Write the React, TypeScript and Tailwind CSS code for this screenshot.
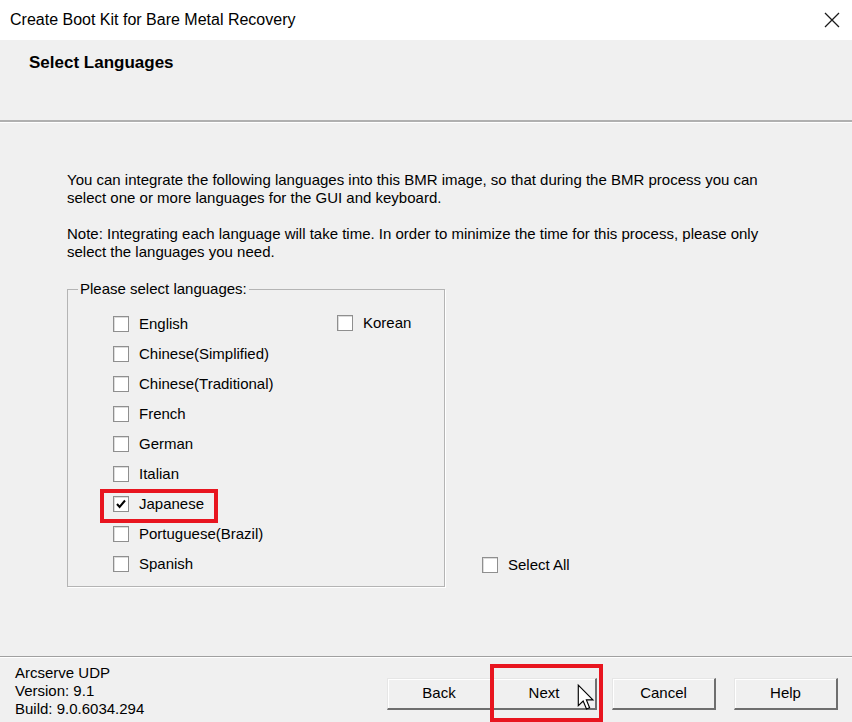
import React from 'react'

const font = { fontFamily: '"Liberation Sans", Arial, sans-serif' }

// Classic Win32 style checkbox with label
function Check({ label, checked = false }: { label: string; checked?: boolean }) {
  return (
    <div className="flex items-center h-[30px]">
      <div className="w-[16px] h-[16px] bg-white border border-[#8f8f8f] shadow-[inset_1px_1px_0_#dcdcdc] flex items-center justify-center">
        {checked && (
          <svg width="12" height="12" viewBox="0 0 12 12">
            <path d="M2 6 L4.6 9 L10 2.5" fill="none" stroke="#000" strokeWidth="2" />
          </svg>
        )}
      </div>
      <span className="ml-[10px] text-[15px] leading-[18px] text-black">{label}</span>
    </div>
  )
}

function Btn({ label, w }: { label: string; w: string }) {
  return (
    <div
      className={`${w} h-[32px] flex items-center justify-center text-[15px] text-black bg-[#f0f0f0] border-t border-l border-t-[#e6e6e6] border-l-[#e6e6e6] border-r-2 border-b-2 border-r-[#6e6e6e] border-b-[#6e6e6e] shadow-[inset_1px_1px_0_#ffffff]`}
    >
      {label}
    </div>
  )
}

export default function App() {
  const langs = [
    'English',
    'Chinese(Simplified)',
    'Chinese(Traditional)',
    'French',
    'German',
    'Italian',
    'Japanese',
    'Portuguese(Brazil)',
    'Spanish',
  ]

  return (
    <div className="relative w-[852px] h-[722px] overflow-hidden flex flex-col bg-[#f0f0f0] text-black" style={font}>
      {/* title bar */}
      <div className="h-[40px] bg-white flex items-center pl-[10px] pr-[12px]">
        <span className="text-[16px]">Create Boot Kit for Bare Metal Recovery</span>
        <svg className="ml-auto" width="16" height="16" viewBox="0 0 16 16">
          <path d="M1 1 L15 15 M15 1 L1 15" stroke="#1a1a1a" strokeWidth="1.3" />
        </svg>
      </div>

      {/* page header */}
      <div className="h-[80px] pl-[29px] pt-[13px]">
        <div className="text-[17px] leading-[20px] font-bold">Select Languages</div>
      </div>
      <div className="h-[2px] bg-[#b0b0b0]" />
      <div className="h-px bg-white" />

      {/* body */}
      <div className="flex-1 pl-[67px] pt-[48px] text-[15px] leading-[18px]">
        <p className="whitespace-nowrap">
          You can integrate the following languages into this BMR image, so that during the BMR process you can
          <br />
          select one or more languages for the GUI and keyboard.
        </p>
        <p className="whitespace-nowrap mt-[18px]">
          Note: Integrating each language will take time. In order to minimize the time for this process, please only
          <br />
          select the languages you need.
        </p>

        <div className="flex items-end mt-[19px]">
          <fieldset className="w-[378px] border border-[#b4b4b4] shadow-[1px_1px_0_#ffffff] pt-[11px] pb-[7px]">
            <legend className="ml-[10px] px-[2px] leading-[18px]">Please select languages:</legend>
            <div className="flex pl-[45px]">
              <div className="w-[224px] flex flex-col">
                {langs.map((l) => (
                  <Check key={l} label={l} checked={l === 'Japanese'} />
                ))}
              </div>
              <div className="flex flex-col -mt-px">
                <Check label="Korean" />
              </div>
            </div>
          </fieldset>
          <div className="ml-[37px] mb-[7px]">
            <Check label="Select All" />
          </div>
        </div>
      </div>

      {/* footer */}
      <div className="h-px bg-[#a0a0a0]" />
      <div className="h-px bg-white" />
      <div className="h-[64px] flex">
        <div className="pl-[15px] pt-[6px] text-[15px] leading-[18px]">
          <div>Arcserve UDP</div>
          <div>Version: 9.1</div>
          <div>Build: 9.0.6034.294</div>
        </div>
        <div className="ml-auto flex pt-[20px] pr-[14px]">
          <Btn label="Back" w="w-[105px]" />
          <Btn label="Next" w="w-[105px]" />
          <div className="w-[15px]" />
          <Btn label="Cancel" w="w-[104px]" />
          <div className="w-[18px]" />
          <Btn label="Help" w="w-[104px]" />
        </div>
      </div>

      {/* annotation highlights */}
      <div className="absolute left-[100px] top-[489px] w-[118px] h-[34px] border-[4px] border-[#e8151f]" />
      <div className="absolute left-[490px] top-[664px] w-[113px] h-[58px] border-[4px] border-[#e8151f]" />

      {/* mouse cursor */}
      <svg className="absolute left-[577px] top-[683px]" width="18" height="30" viewBox="0 0 14 22">
        <path
          d="M1 1 L1 17 L4.8 13.4 L7.4 19.6 L9.8 18.6 L7.3 12.5 L12.4 12.5 Z"
          fill="#fff"
          stroke="#000"
          strokeWidth="0.9"
          strokeLinejoin="miter"
        />
      </svg>
    </div>
  )
}
